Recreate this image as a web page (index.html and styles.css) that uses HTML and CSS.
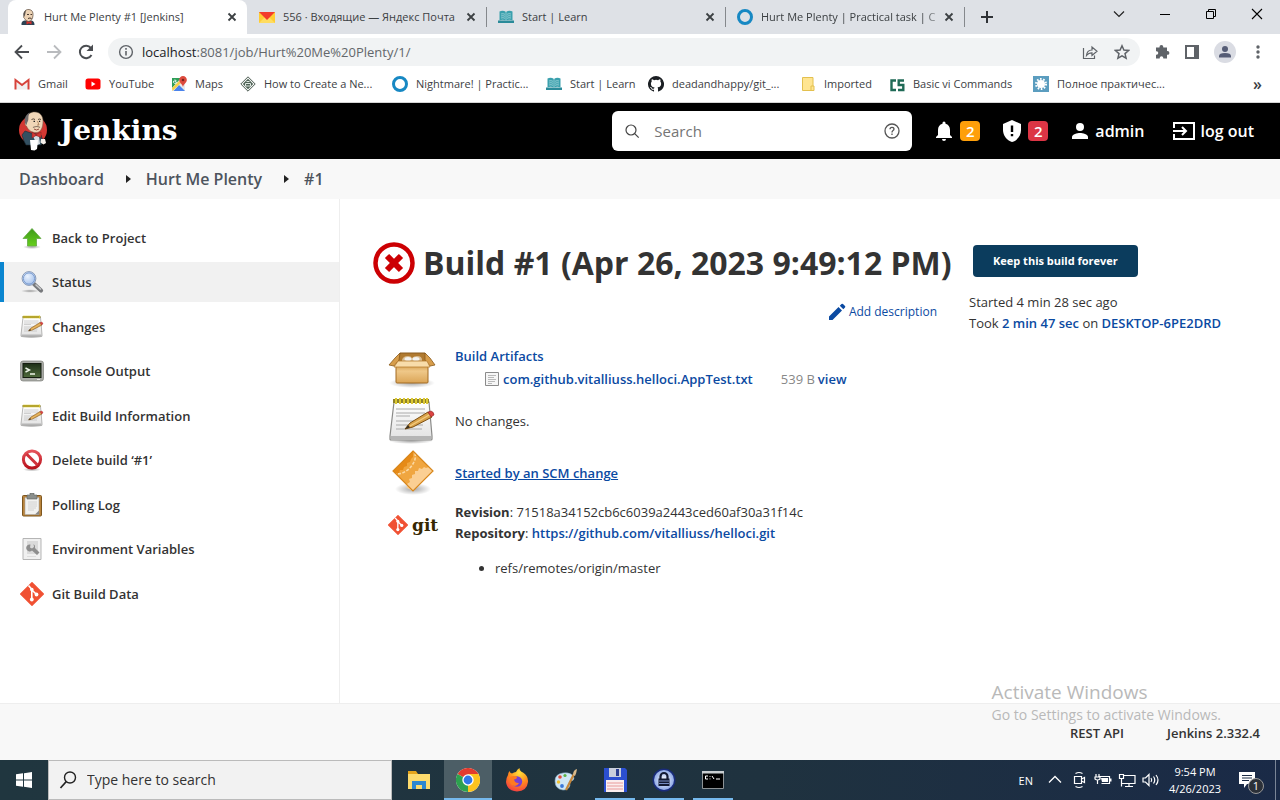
FILE: index.html
```
<!DOCTYPE html>
<html lang="en">
<head>
<meta charset="utf-8">
<title>Hurt Me Plenty #1 [Jenkins]</title>
<link rel="stylesheet" href="styles.css">
</head>
<body>
<svg class="defs" aria-hidden="true">
  <defs>
    <linearGradient id="g-green" x1="0" y1="0" x2="0" y2="1"><stop offset="0" stop-color="#3f9a1c"/><stop offset="1" stop-color="#66cf1b"/></linearGradient>
    <linearGradient id="g-box" x1="0" y1="0" x2="0" y2="1"><stop offset="0" stop-color="#d9a354"/><stop offset=".3" stop-color="#efc889"/><stop offset="1" stop-color="#dba557"/></linearGradient>
    <linearGradient id="g-paper" x1="0" y1="0" x2="0" y2="1"><stop offset="0" stop-color="#ffffff"/><stop offset="1" stop-color="#e2e2e2"/></linearGradient>
    <linearGradient id="g-orange" x1="0" y1="0" x2="1" y2="1"><stop offset="0" stop-color="#e98f1c"/><stop offset="1" stop-color="#f0a640"/></linearGradient>
    <linearGradient id="g-red" x1="0" y1="0" x2="0" y2="1"><stop offset="0" stop-color="#e5525a"/><stop offset="1" stop-color="#b8121c"/></linearGradient>
    <linearGradient id="g-term" x1="0" y1="0" x2="0" y2="1"><stop offset="0" stop-color="#1d2e17"/><stop offset="1" stop-color="#4f6b3c"/></linearGradient>
    <radialGradient id="g-lens" cx=".4" cy=".35" r=".7"><stop offset="0" stop-color="#eaf3ff"/><stop offset="1" stop-color="#9dbbe8"/></radialGradient>
    <radialGradient id="g-fox" cx=".6" cy=".2" r=".9"><stop offset="0" stop-color="#ffe13a"/><stop offset=".5" stop-color="#ff8a1c"/><stop offset="1" stop-color="#f0304a"/></radialGradient>
    <radialGradient id="g-shade"><stop offset="0" stop-color="#000" stop-opacity=".35"/><stop offset="1" stop-color="#000" stop-opacity="0"/></radialGradient>
    <radialGradient id="g-lock"><stop offset="0" stop-color="#ffffff"/><stop offset="1" stop-color="#8fa9e6"/></radialGradient>
    <clipPath id="c-diamond"><path d="M24 3L43.500 23 24 43 4.500 23z"/></clipPath>
  </defs>
  <symbol id="butler" viewBox="0 0 28 40">
    <circle cx="14" cy="19" r="14" fill="#d33833"/>
    <path d="M6 20L3 24 5 30 7 34 22 34 24 30 22 24 12 22z" fill="#335061" stroke="#1b2a33" stroke-width=".6"/>
    <path d="M14 25l6 0 1 8-3 1z" fill="#d9dee2"/>
    <path d="M7 8C8 3 12 .8 16 1 21 1.200 24 5 24 10 24 16 22 21 18 21.500 13 22 9 19 7.500 15 5.500 14 5.500 11 7 11z" fill="#f0d6b7" stroke="#6b5a48" stroke-width=".5"/>
    <path d="M6.500 13C4.500 8 6.500 3.500 11 1.500 8.500 5 10 7 9 10 8 11 8 13 7.500 14z" fill="#6d6b6d"/>
    <path d="M12.500 8.500q2-1.200 3.500 0M19 8.500q1.500-1 3 0" stroke="#4a3a2c" stroke-width=".9" fill="none"/>
    <path d="M14.500 10.300h1.500M20 10.300h1.200" stroke="#222" stroke-width="1.300"/>
    <path d="M18.500 10l1.500 4h-2" fill="none" stroke="#a57a52" stroke-width=".8"/>
    <path d="M14 16.500q4-2 7 0" fill="none" stroke="#8a7765" stroke-width="1.200"/>
    <path d="M15 18q2.500 2 5 0" fill="none" stroke="#8c3d32" stroke-width=".9"/>
    <path d="M13 21l4 2.500 5-2.500v5.500l-5-2-4 2.500z" fill="#d33833" stroke="#81231f" stroke-width=".5"/>
    <path d="M11 29h8l-1 9-2.500 1.500L12 39z" fill="#fff"/>
    <path d="M22 28l4 0 1 4-2.500 1.500-3-2z" fill="#f5f0ea"/>
  </symbol>
  <symbol id="butler-small" viewBox="0 0 16 16">
    <path d="M1.500 16q-.5-4 3-4.500h7q3 .5 3 4.500z" fill="#2c4353"/>
    <path d="M4 4.500Q5 0 9 .5q4.500.5 4 6-.5 5.500-4.500 6Q5.500 12 4.500 9.500 3 8.500 4 7z" fill="#ecd2b4" stroke="#5b4a3c" stroke-width=".7"/>
    <path d="M3.700 8Q2.500 3 6 1q-.5 3-1 5z" fill="#59514c"/>
    <path d="M7 5.500h2M10.500 5.500h1.500M8 9.500q2-1 3.500 0" stroke="#493a30" fill="none"/>
    <path d="M6.500 12l2.500 1 2.500-1v3.500L9 14.300 6.500 15.500z" fill="#d8302a"/>
  </symbol>
  <symbol id="book" viewBox="0 0 16 16">
    <path d="M0 11.500h16v2.500H0z" fill="#2a8a99"/>
    <path d="M1.500 2.500 Q5 1 8 3 Q11 1 14.500 2.500V11.500Q11 10 8 11.800Q5 10 1.500 11.500Z" fill="#3aa0ad"/>
    <path d="M3 5q2-.8 4 .3M3 7q2-.8 4 .3M3 9q2-.8 4 .3M9 5.300q2-1.100 4-.3M9 7.300q2-1.100 4-.3M9 9.300q2-1.100 4-.3M8 3v9" stroke="#c4e6ea" stroke-width=".6" fill="none"/>
  </symbol>
  <symbol id="ring" viewBox="0 0 16 16"><circle cx="8" cy="8" r="6.500" fill="none" stroke="#1788c3" stroke-width="3"/></symbol>
  <symbol id="close" viewBox="0 0 16 16"><path d="M4.500 4.500l7 7M11.500 4.500l-7 7" stroke="#3c4043" stroke-width="1.800"/></symbol>
  <symbol id="notepad" viewBox="0 0 48 48">
    <ellipse cx="23" cy="44" rx="22" ry="3" fill="url(#g-shade)"/>
    <path d="M6 5h35l3 34v3q0 1-1 1H3q-1 0-1-1v-3z" fill="url(#g-paper)" stroke="#8a8a88" stroke-width="1.200"/>
    <path d="M3 39h40v3.500H3z" fill="#b5b5b5"/>
    <path d="M8 12h29M8 16h29M8 19h14M8 24h28M8 28h27M8 32h26" stroke="#aaa" stroke-width="1"/>
    <path d="M5 2h36v4H5z" fill="#8f8328"/>
    <path d="M8 1v6M12 1v6M16 1v6M20 1v6M24 1v6M28 1v6M32 1v6M36 1v6M39 1v6" stroke="#dcc832" stroke-width="2"/>
    <path d="M17 32l5-6L40 15l4 5L25 30z" fill="#d9a24a" stroke="#7c4f12" stroke-width="1"/>
    <path d="M22 29L42 17.500" stroke="#f3cd82" stroke-width="1.200"/>
    <path d="M40 15l3-1q3 1 3 4l-3 2z" fill="#dc4343" stroke="#8c2020" stroke-width=".6"/>
    <path d="M17 32l3-4 2 2.500z" fill="#3b3020"/>
  </symbol>
  <symbol id="git" viewBox="0 0 24 24">
    <path d="M12 .7 23.300 12 12 23.300 .7 12Z" fill="#f05133" stroke="#f05133" stroke-width="1.400" stroke-linejoin="round"/>
    <path d="M8.500 3.500l3.300 3.800v10M12 8l4.500 4.500" stroke="#fff" stroke-width="1.600" fill="none"/>
    <circle cx="11.800" cy="7.600" r="1.800" fill="#fff"/><circle cx="11.800" cy="17.500" r="1.900" fill="#fff"/><circle cx="16.500" cy="12.500" r="1.900" fill="#fff"/>
  </symbol>
</svg>

<header class="browser">
  <div class="tabstrip">
    <div class="tab tab-active"><svg class="i16"><use href="#butler-small"/></svg><span class="tab-title">Hurt Me Plenty #1 [Jenkins]</span><button class="bare" aria-label="Close tab"><svg class="i16"><use href="#close"/></svg></button></div>
    <div class="tab"><svg class="i16" viewBox="0 0 16 16"><path d="M0 3h16v11H0z" fill="#ffcc33"/><path d="M0 14l6-6h4l6 6z" fill="#ffdc60"/><path d="M0 3h16L8 11z" fill="#f33b2c"/></svg><span class="tab-title">556 · Входящие — Яндекс Почта</span><button class="bare" aria-label="Close tab"><svg class="i16"><use href="#close"/></svg></button></div>
    <div class="tab tab-line"><svg class="i16"><use href="#book"/></svg><span class="tab-title">Start | Learn</span><button class="bare" aria-label="Close tab"><svg class="i16"><use href="#close"/></svg></button></div>
    <div class="tab tab-line"><svg class="i16"><use href="#ring"/></svg><span class="tab-title tab-fade">Hurt Me Plenty | Practical task | C</span><button class="bare" aria-label="Close tab"><svg class="i16"><use href="#close"/></svg></button></div>
    <button class="bare newtab" aria-label="New tab"><svg class="i16" viewBox="0 0 16 16"><path d="M8 2v12M2 8h12" stroke="#2f3236" stroke-width="2"/></svg></button>
    <div class="winctl">
      <button class="bare" aria-label="Search tabs"><svg class="i16" viewBox="0 0 16 16"><path d="M3 5.500l5 5 5-5" fill="none" stroke="#222" stroke-width="1.200"/></svg></button>
      <button class="bare" aria-label="Minimize"><svg class="i16" viewBox="0 0 16 16"><path d="M3 8.500h10" stroke="#000"/></svg></button>
      <button class="bare" aria-label="Restore"><svg class="i16" viewBox="0 0 16 16"><path d="M3.500 5.500h7v7h-7zM5.500 5.500v-2h7v7h-2" fill="none" stroke="#000"/></svg></button>
      <button class="bare" aria-label="Close"><svg class="i16" viewBox="0 0 16 16"><path d="M3 3l10 10M13 3L3 13" stroke="#000" stroke-width="1.100"/></svg></button>
    </div>
  </div>
  <div class="toolbar">
    <button class="bare" aria-label="Back"><svg class="i20" viewBox="0 0 20 20"><path d="M17 10H4M10 3.500L3.500 10l6.500 6.500" fill="none" stroke="#4a4d51" stroke-width="1.800"/></svg></button>
    <button class="bare" aria-label="Forward"><svg class="i20" viewBox="0 0 20 20"><path d="M3 10h13M10 3.500l6.500 6.500-6.500 6.500" fill="none" stroke="#b9bbbe" stroke-width="1.800"/></svg></button>
    <button class="bare" aria-label="Reload"><svg class="i20" viewBox="0 0 20 20"><path d="M15.500 13a6.200 6.200 0 1 1-.6-7" fill="none" stroke="#4a4d51" stroke-width="2"/><path d="M17 2.500v6.500h-6.500z" fill="#4a4d51"/></svg></button>
    <div class="omnibox">
      <svg class="i16" viewBox="0 0 16 16"><circle cx="8" cy="8" r="6.400" fill="none" stroke="#5f6368" stroke-width="1.400"/><path d="M8 7v4.500M8 4v1.700" stroke="#5f6368" stroke-width="1.600"/></svg>
      <a class="url" href="#"><span class="host">localhost</span>:8081/job/Hurt%20Me%20Plenty/1/</a>
      <svg class="i16" viewBox="0 0 16 16"><path d="M1.500 4v10.500h11v-3" fill="none" stroke="#5f6368" stroke-width="1.200"/><path d="M4.500 11.500q.5-5.500 5.500-5.500V3l5 4.300-5 4.200V8.800Q6.500 8.800 4.500 11.500z" fill="none" stroke="#5f6368" stroke-width="1.200"/></svg>
      <svg class="i16" viewBox="0 0 16 16"><path d="M8 1.800l1.900 4.300 4.700.4-3.600 3.100 1.100 4.600L8 11.800l-4.100 2.400L5 9.600 1.400 6.500l4.700-.4z" fill="none" stroke="#5f6368" stroke-width="1.500"/></svg>
    </div>
    <div class="tools">
      <svg class="i16" viewBox="0 0 16 16"><path d="M5.500 3a1.900 1.900 0 0 1 3.800 0V3.500H13V7h.5a1.900 1.900 0 0 1 0 3.800H13V14.500H9.300V14a1.800 1.800 0 0 0-3.600 0v.5H2V10.800h.5a1.800 1.800 0 0 0 0-3.600H2V3.500h3.500z" fill="#5f6368"/></svg>
      <svg class="i16" viewBox="0 0 16 16"><path d="M2 2h12v12H2z" fill="none" stroke="#5f6368" stroke-width="2"/><path d="M10 2h4v12h-4z" fill="#5f6368"/></svg>
      <svg class="i22" viewBox="0 0 22 22"><circle cx="11" cy="11" r="11" fill="#dadce3"/><circle cx="11" cy="8" r="3" fill="#565d76"/><path d="M5 16.500v-1.500q0-3 6-3t6 3v1.500z" fill="#565d76"/></svg>
      <svg class="i16" viewBox="0 0 16 16" fill="#5f6368"><circle cx="8" cy="3" r="1.700"/><circle cx="8" cy="8" r="1.700"/><circle cx="8" cy="13" r="1.700"/></svg>
    </div>
  </div>
  <nav class="bookmarks" aria-label="Bookmarks">
    <a href="#"><svg class="i16" viewBox="0 0 16 16"><path d="M2.500 13.500V6l5.500 4.500L13.500 6v7.500z" fill="#f0f0f0"/><path d="M1.500 13.500V4L8 9l6.500-5v9.500" fill="none" stroke="#d6433b" stroke-width="2"/></svg>Gmail</a>
    <a href="#"><svg class="i16" viewBox="0 0 16 16"><rect x=".5" y="2.500" width="15" height="11" rx="2.500" fill="#f00"/><path d="M6.500 5.500v5l4-2.500z" fill="#fff"/></svg>YouTube</a>
    <a href="#"><svg class="i16" viewBox="0 0 16 16"><path d="M1 2h13v13H1z" fill="#e8eaed"/><path d="M1 2h9L1 12z" fill="#2f9e58"/><path d="M2.500 15L8 9l6 6z" fill="#4a83ec"/><path d="M1 12l7-7 2 2-8.500 8z" fill="#f7d24a"/><path d="M12 0a3.800 3.800 0 0 0-3.800 4C8.200 6.500 11 7.500 12 11c1-3.500 3.800-4.500 3.800-7A3.800 3.800 0 0 0 12 0z" fill="#dd4b3e"/><circle cx="12" cy="4" r="1.300" fill="#7b231c"/><path d="M5.500 5H4v1h.8M5.800 6a1.700 1.700 0 1 1-.6-1.500" fill="none" stroke="#fff" stroke-width=".8"/></svg>Maps</a>
    <a href="#"><svg class="i16" viewBox="0 0 16 16"><path d="M8 .8L15.200 8 8 15.200.8 8z" fill="#f4f6f4" stroke="#4a5a50" stroke-width="1"/><path d="M8 2.800l5.200 5.200L8 13.200 2.800 8z" fill="#4f6256"/><path d="M5.500 7.500h5v2.500h-5zM6.500 5.500h3" stroke="#dfe8e2" fill="none"/></svg>How to Create a Ne...</a>
    <a href="#"><svg class="i16"><use href="#ring"/></svg>Nightmare! | Practic...</a>
    <a href="#"><svg class="i16"><use href="#book"/></svg>Start | Learn</a>
    <a href="#"><svg class="i16" viewBox="0 0 16 16"><path fill="#1b1f23" d="M8 0a8 8 0 0 0-2.530 15.590c.4.070.55-.17.55-.38v-1.490c-2.010.37-2.530-.49-2.690-.94-.09-.23-.48-.94-.82-1.130-.28-.15-.68-.52-.01-.53.63-.01 1.080.58 1.230.82.720 1.210 1.870.87 2.330.66.07-.52.28-.87.51-1.070-1.780-.2-3.640-.89-3.640-3.950 0-.87.31-1.590.82-2.150-.08-.2-.36-1.020.08-2.120 0 0 .67-.21 2.200.82a7.600 7.600 0 0 1 4 0c1.530-1.040 2.200-.82 2.200-.82.44 1.100.16 1.920.08 2.120.51.56.82 1.270.82 2.150 0 3.070-1.870 3.750-3.650 3.950.29.25.54.73.54 1.480v2.200c0 .21.15.46.55.38A8 8 0 0 0 8 0z"/></svg>deadandhappy/git_...</a>
    <a href="#"><svg class="i16" viewBox="0 0 16 16"><path d="M2.500 1.500h10.500v8.500h1v4.500H2.500z" fill="#ffe591" stroke="#e3c04f"/><path d="M11 14.500V10h2" fill="none" stroke="#e3c04f"/></svg>Imported</a>
    <a href="#"><svg class="i16" viewBox="0 0 16 16"><path d="M7 4.500H2.500v9.500H7M15 4.500H9.700v4.500h4.600v5H9" fill="none" stroke="#1f6a56" stroke-width="2.400"/></svg>Basic vi Commands</a>
    <a href="#"><svg class="i16" viewBox="0 0 16 16"><path d="M0 0h16v16H0z" fill="#5b9dbf"/><circle cx="8" cy="8" r="4" fill="#fff"/><circle cx="8" cy="8" r="5" fill="none" stroke="#fff" stroke-width="2" stroke-dasharray="1.600 1.540"/></svg>Полное практичес...</a>
    <button class="bare more" aria-label="More bookmarks">»</button>
  </nav>
</header>

<div class="masthead">
  <a class="brand" href="#"><svg class="brand-icon"><use href="#butler"/></svg>Jenkins</a>
  <form class="searchbox">
    <svg class="i16" viewBox="0 0 16 16"><circle cx="7" cy="7" r="5" fill="none" stroke="#444" stroke-width="1.200"/><path d="M10.700 10.700l4 4" stroke="#444" stroke-width="1.200"/></svg>
    <input type="text" placeholder="Search" aria-label="Search">
    <a href="#" aria-label="Help"><svg class="i16" viewBox="0 0 16 16"><circle cx="8" cy="8" r="7" fill="none" stroke="#555" stroke-width="1.300"/><path d="M6 6.300q0-2 2-2t2 1.800q0 1-1.200 1.700Q8 8.400 8 9.500M8 10.600v1.400" fill="none" stroke="#555" stroke-width="1.300"/></svg></a>
  </form>
  <a class="alert" href="#"><svg class="i24" viewBox="0 0 24 24" fill="#fff"><path d="M12 22a2 2 0 0 0 2-2h-4a2 2 0 0 0 2 2zm6-6v-5c0-3.100-1.600-5.600-4.500-6.300V4a1.500 1.500 0 0 0-3 0v.7C7.600 5.400 6 7.900 6 11v5l-2 2v1h16v-1z"/></svg><span class="badge badge-orange">2</span></a>
  <a class="alert" href="#"><svg class="i24" viewBox="0 0 24 24"><path d="M12 1L3 5v6c0 5.500 3.800 10.700 9 12 5.200-1.300 9-6.500 9-12V5z" fill="#fff"/><path d="M12 6.500v6.500M12 15v2.200" stroke="#000" stroke-width="2.400"/></svg><span class="badge badge-red">2</span></a>
  <a class="who" href="#"><svg class="i24" viewBox="0 0 24 24" fill="#fff"><circle cx="12" cy="8" r="4"/><path d="M4 20v-2c0-2.700 5.300-4 8-4s8 1.300 8 4v2z"/></svg>admin</a>
  <a class="logout" href="#"><svg class="i24" viewBox="0 0 24 24"><path d="M2 9V4h20v16H2v-5M1 12h12M10 8l4 4-4 4" fill="none" stroke="#fff" stroke-width="2"/></svg>log out</a>
</div>

<nav class="crumbs" aria-label="Breadcrumb">
  <a href="#">Dashboard</a><svg class="arrow" viewBox="0 0 5 8"><path d="M0 0l5 4-5 4z"/></svg>
  <a href="#">Hurt Me Plenty</a><svg class="arrow" viewBox="0 0 5 8"><path d="M0 0l5 4-5 4z"/></svg>
  <a href="#">#1</a>
</nav>

<div class="page">
  <nav class="side" aria-label="Build">
    <a href="#"><svg class="i24" viewBox="0 0 24 24"><ellipse cx="12" cy="21" rx="9" ry="2" fill="url(#g-shade)"/><path d="M12 2.500l9 10h-4.500V20h-9v-7.500H3z" fill="url(#g-green)" stroke="#63a845" stroke-width=".8"/></svg>Back to Project</a>
    <a class="current" href="#"><svg class="i24" viewBox="0 0 24 24"><ellipse cx="10" cy="21" rx="9" ry="1.800" fill="url(#g-shade)"/><path d="M14 14l7 6.500" stroke="#77797c" stroke-width="4.200" stroke-linecap="round"/><path d="M15.500 14.500l5.500 5" stroke="#c9cacc" stroke-width="1.500"/><circle cx="9" cy="8.500" r="6.900" fill="url(#g-lens)" stroke="#8c9db8" stroke-width="1"/><circle cx="9" cy="8.500" r="5.600" fill="none" stroke="#7d9ed2" stroke-width="1"/></svg>Status</a>
    <a href="#"><svg class="i24"><use href="#notepad"/></svg>Changes</a>
    <a href="#"><svg class="i24" viewBox="0 0 24 24"><rect x=".5" y="2" width="23" height="20" rx="2.500" fill="#a9aba6" stroke="#7f817d" stroke-width=".7"/><rect x="3" y="4.500" width="18" height="14" fill="url(#g-term)" stroke="#151d10"/><path d="M5.500 9l4 2-4 2M10 15h5" fill="none" stroke="#eef5e8" stroke-width="1.400"/><path d="M17 20.500h3" stroke="#e8e8e8"/></svg>Console Output</a>
    <a href="#"><svg class="i24"><use href="#notepad"/></svg>Edit Build Information</a>
    <a href="#"><svg class="i24" viewBox="0 0 24 24"><ellipse cx="12" cy="21.500" rx="9" ry="2" fill="url(#g-shade)"/><circle cx="12" cy="11.500" r="8.600" fill="#fff" stroke="url(#g-red)" stroke-width="3"/><path d="M6.500 6l11 11" stroke="#d0323b" stroke-width="3"/></svg>Delete build ‘#1’</a>
    <a href="#"><svg class="i24" viewBox="0 0 24 24"><rect x="2.500" y="2.500" width="19" height="20.500" rx="1" fill="#b9843c" stroke="#7d561f"/><path d="M5 4.500h14v17H5z" fill="#f2f2f0" stroke="#aaa" stroke-width=".6"/><path d="M15 21.500l4-4v4z" fill="#888"/><path d="M8 9h9M8 11h9M8 13h9M8 15h8M8 17h6" stroke="#c9c9c9" stroke-width=".8"/><path d="M7 2h3V0h4v2h3v4H7z" fill="#8b8f8c" stroke="#5f625f" stroke-width=".6"/></svg>Polling Log</a>
    <a href="#"><svg class="i24" viewBox="0 0 24 24"><path d="M3 1.500h18v21H3z" fill="#f0f0f0" stroke="#b5b5b5"/><path d="M7 4h11v13H7z" fill="#dadada"/><path d="M10.500 7.500a3.500 3.500 0 1 0 1.500 6l5 4.500 2.500-2.500-4.500-4.500a3.500 3.500 0 0 0-1.500-4l.5 3-2 1.500-2-1z" fill="#8e8e8e"/><path d="M7 19.500h9" stroke="#ddd"/></svg>Environment Variables</a>
    <a href="#"><svg class="i24"><use href="#git"/></svg>Git Build Data</a>
  </nav>

  <main class="content">
    <section class="build">
      <h1><svg class="i42" viewBox="0 0 42 42"><circle cx="21" cy="21" r="18.500" fill="#fff" stroke="#cc0003" stroke-width="4.500"/><path d="M14 14l14 14M28 14L14 28" stroke="#cc0003" stroke-width="6"/></svg>Build #1 (Apr 26, 2023 9:49:12 PM)</h1>
      <a class="adddesc" href="#"><svg class="i18" viewBox="0 0 18 18" fill="#0b4aa2"><path d="M1 13.500V17h3.500L14 7.500 10.500 4zM17 4.500q.7-.8 0-1.500L15 1q-.8-.7-1.500 0L11.800 2.700l3.500 3.500z"/></svg>Add description</a>
      <table class="summary">
        <tr class="r-art">
          <td class="pic"><svg class="i48" viewBox="0 0 48 48"><ellipse cx="24" cy="37" rx="23" ry="5" fill="url(#g-shade)"/><path d="M12 7h25l4 10H8z" fill="#b07a30" stroke="#8a5a1c"/><path d="M14 14q1-4 6-4 3 0 4 2 2-2 5-2 5 0 5 4v3H14z" fill="#d9bd92"/><ellipse cx="20" cy="13" rx="3.500" ry="2" fill="#f4f4f2"/><ellipse cx="28" cy="13" rx="3.500" ry="2" fill="#f4f4f2"/><path d="M12 7L7 12 1 19l5 1 5-6zM37 7l5 5 5 7-5 1-5-6z" fill="#d79d4b" stroke="#8a5a1c" stroke-width=".8"/><path d="M8 20h32v16q0 1-1 1H9q-1 0-1-1z" fill="url(#g-box)" stroke="#a26b22"/><path d="M10 15h29l3 6H6z" fill="#f8dcaa" stroke="#b87e31" stroke-width=".8"/></svg></td>
          <td><a href="#">Build Artifacts</a>
            <div class="file"><svg class="i16" viewBox="0 0 16 16"><path d="M1.500 1.500h13v13h-13z" fill="#f6f6f6" stroke="#8b8b8b"/><path d="M4 4.500h8M4 6.500h6M4 8.500h8M4 10.500h7M4 12.500h4" stroke="#aaa" stroke-width=".8"/></svg><a href="#">com.github.vitalliuss.helloci.AppTest.txt</a><span class="size">539 B</span><a href="#">view</a></div></td>
        </tr>
        <tr class="r-chg"><td class="pic"><svg class="i48"><use href="#notepad"/></svg></td><td>No changes.</td></tr>
        <tr class="r-scm">
          <td class="pic"><svg class="i48" viewBox="0 0 48 48"><ellipse cx="25" cy="39" rx="18" ry="6" fill="url(#g-shade)"/><path d="M25 1L45 21 25 41 5 21z" fill="#f0a640"/><path d="M25 1L5 21l3 3 3-1 1-3 3 0 1-3 3-1 0-3 3-1 1-3 2-2z" fill="#e68a17"/><path d="M27 3q1 5-1 9-3 6-8 9-4 3-10 3" fill="none" stroke="#fbd9a4" stroke-width="1.600" stroke-dasharray="3 1.500"/><path d="M45 21l-4-4-3 1-2-1-2 2-3-1-1 3-3 0 0 3-3 1 0 3-3 1 1 3-3 2 1 2-2 2 1 0 6 3z" fill="#fbcf93"/><path d="M25 1L45 21 25 41 5 21z" fill="none" stroke="#d8871c" stroke-width="1.200"/></svg></td>
          <td><a class="ul" href="#">Started by an SCM change</a></td>
        </tr>
        <tr class="r-git">
          <td class="pic"><span class="gitlogo"><svg class="i20"><use href="#git"/></svg>git</span></td>
          <td><b>Revision</b>: 71518a34152cb6c6039a2443ced60af30a31f14c<br><b>Repository</b>: <a href="#">https://github.com/vitalliuss/helloci.git</a>
            <ul><li>refs/remotes/origin/master</li></ul></td>
        </tr>
      </table>
    </section>
    <aside class="info">
      <button class="keep">Keep this build forever</button>
      <p>Started 4 min 28 sec ago<br>Took <a href="#">2 min 47 sec</a> on <a href="#">DESKTOP-6PE2DRD</a></p>
    </aside>
  </main>
</div>

<footer class="foot"><a href="#">REST API</a><a href="#">Jenkins 2.332.4</a></footer>
<div class="activate"><p class="act-big">Activate Windows</p><p class="act-small">Go to Settings to activate Windows.</p></div>

<div class="taskbar">
  <button class="bare start" aria-label="Start"><svg class="i16" viewBox="0 0 16 16" fill="#fff"><path d="M0 2.300L7 1.300v6.200H0zM8 1.200L16 0v7.500H8zM0 8.500h7v6.200l-7-1zM8 8.500h8V16l-8-1.200z"/></svg></button>
  <label class="tasksearch"><svg class="i20" viewBox="0 0 20 20"><circle cx="12" cy="7.500" r="5.500" fill="none" stroke="#222" stroke-width="1.400"/><path d="M8.200 11.600L2.500 18" stroke="#222" stroke-width="1.600"/></svg><input type="text" placeholder="Type here to search"></label>
  <div class="apps">
    <button class="app" aria-label="File Explorer"><svg class="i24" viewBox="0 0 24 24"><path d="M1 3h8l2 3h12v3H1z" fill="#e5a51c"/><path d="M1 6h22v15H1z" fill="#fddb6d"/><path d="M5 21v-8h14v8h-4v-4H9v4z" fill="#2d87d0"/></svg></button>
    <button class="app on focus" aria-label="Chrome"><svg class="i24" viewBox="0 0 24 24"><circle cx="12" cy="12" r="12" fill="#fff"/><path d="M12 12L1.600 6A12 12 0 0 1 22.400 6z" fill="#e23b2e"/><path d="M12 12L22.400 6A12 12 0 0 1 12 24z" fill="#fcc31e"/><path d="M12 12l0 12A12 12 0 0 1 1.600 6z" fill="#2da14f"/><path d="M22.400 6H12l5.200 9z" fill="#fcc31e"/><circle cx="12" cy="12" r="5.700" fill="#fff"/><circle cx="12" cy="12" r="4.400" fill="#2f77e6"/></svg></button>
    <button class="app" aria-label="Firefox"><svg class="i24" viewBox="0 0 24 24"><path d="M3 7q0-2 1.500-4Q5 5 7 5.500q2-1.500 4-1.500Q12 1.500 14.500 0q0 3 3.500 4.500Q23.500 8 23 14q-1 9-11 9.500Q2 23 1 14q0-4 2-7z" fill="url(#g-fox)"/><circle cx="12" cy="13.500" r="5.200" fill="#7a3fd0"/><path d="M5 9q4-2 7 0 0 2-3 2.500 1 4 5 3.500-2 4-6 2.500T5 9z" fill="#ff7a20"/></svg></button>
    <button class="app" aria-label="Paint"><svg class="i24" viewBox="0 0 24 24"><path d="M1 13Q1 6 9 5q9-1 11 5 0 3-4 3-2 1 0 4-1 5-7 5-8-1-8-9z" fill="#cfe6f5" stroke="#8fb6cf" stroke-width=".6"/><circle cx="6" cy="9" r="1.800" fill="#e34b3a"/><circle cx="11" cy="7.500" r="1.600" fill="#5bb346"/><circle cx="4.500" cy="14" r="1.700" fill="#f1c232"/><circle cx="8" cy="18" r="1.900" fill="#3c78d8"/><path d="M12 22l8-16" stroke="#c7873a" stroke-width="2.200"/><path d="M19 7q0-5 4-6-.500 4-2 7z" fill="#d9b98a"/></svg></button>
    <button class="app on" aria-label="Total Commander"><svg class="i24" viewBox="0 0 24 24"><path d="M1 0h21l2 2v22H1z" fill="#2b4fd0"/><path d="M6 0h12v9H6z" fill="#c9cfdc"/><path d="M13 1h3v7h-3z" fill="#2b3f90"/><path d="M3 12h18v12H3z" fill="#fbeeee"/><path d="M4 15h16M4 18h16M4 21h16" stroke="#e89a9a"/></svg></button>
    <button class="app on" aria-label="KeePass"><svg class="i24" viewBox="0 0 24 24"><circle cx="12" cy="12" r="11.500" fill="#1a2c7a"/><circle cx="12" cy="12" r="10" fill="url(#g-lock)"/><path d="M8.500 11V8.500a3.500 3.500 0 0 1 7 0V11" fill="none" stroke="#141a33" stroke-width="2.200"/><path d="M6.500 10.500h11V18h-11z" fill="#141a33"/><path d="M7 13h10M7 15.500h10" stroke="#8fa9e6" stroke-width=".8"/></svg></button>
    <button class="app on" aria-label="Command Prompt"><svg class="i24" viewBox="0 0 24 24"><path d="M1.500 3.500h21v17h-21z" fill="#000" stroke="#8c9295"/><path d="M1 3h22v2.500H1z" fill="#c9ced1"/><path d="M7 8H4.500v3H7M9 8v.8M9 10.500v.8M11 8l2 3M15 11h4" fill="none" stroke="#fff"/></svg></button>
  </div>
  <div class="tray">
    <span class="lang">EN</span>
    <svg class="i24" viewBox="0 0 24 24"><path d="M6 14.500l6-6 6 6" fill="none" stroke="#fff" stroke-width="1.300"/></svg>
    <svg class="i24" viewBox="0 0 24 24" fill="none" stroke="#fff"><path d="M8.500 5.500q3.500-2 7 0M8.500 18.500q3.500 2 7 0M7.500 8.500h7v7h-7zM14.500 11l3-1.500v5l-3-1.500" stroke-width="1.200"/></svg>
    <svg class="i24" viewBox="0 0 24 24"><path d="M7.500 8.500h11v7h-8" fill="none" stroke="#fff" stroke-width="1.200"/><path d="M10 10h7v4h-6zM19 10.500h1.500v3H19z" fill="#fff"/><path d="M5 6v3M8 6v3M4 9h5v2q-2.500 2-5 0zM6.500 12v4" stroke="#fff" fill="none" stroke-width="1.200"/></svg>
    <svg class="i24" viewBox="0 0 24 24"><path d="M9 7.500h11v8H6.500V11M10 18.500h8M14 15.500v3M4.500 6.500h4v4h-4zM6.500 10.500v8" fill="none" stroke="#fff" stroke-width="1.200"/></svg>
    <svg class="i24" viewBox="0 0 24 24"><path d="M4 10h2.500L10 6.500v11L6.500 14H4zM12 10q1.500 2 0 4M14.500 8.500q2.500 3.500 0 7M17 7q4 5 0 10" fill="none" stroke="#fff" stroke-width="1.200"/></svg>
    <span class="clock">9:54 PM<br>4/26/2023</span>
    <button class="bare notes" aria-label="Notifications"><svg class="i24" viewBox="0 0 24 24"><path d="M4 4h16v12h-8l-3 4v-4H4z" fill="#fff"/><path d="M7 7.500h10M7 10h10M7 12.500h7" stroke="#1c2c45"/></svg><span class="count">1</span></button>
  </div>
</div>
</body>
</html>
```

FILE: styles.css
```
* { box-sizing: border-box; }
body {
  margin: 0;
  min-height: 100vh;
  display: flex;
  flex-direction: column;
  position: relative;
  font: 13px/21px "Open Sans", "Noto Sans", sans-serif;
  color: #333;
  background: #fff;
}
a { color: #0b4aa2; text-decoration: none; font-weight: 600; }
p { margin: 0; }
svg { display: block; flex: none; }
.defs { position: absolute; width: 0; height: 0; }
.i16 { width: 16px; height: 16px; }
.i18 { width: 18px; height: 18px; }
.i20 { width: 20px; height: 20px; }
.i22 { width: 22px; height: 22px; }
.i24 { width: 24px; height: 24px; }
.i42 { width: 42px; height: 42px; }
.i48 { width: 48px; height: 48px; }
.bare {
  border: 0; padding: 0; background: none; font: inherit; color: inherit;
  display: flex; align-items: center; justify-content: center;
}

/* browser frame */
.browser { border-bottom: 1px solid #d5d5d5; font-size: 11px; line-height: 16px; color: #3c4043; }
.browser a { color: #3c4043; font-weight: 400; }
.tabstrip { display: flex; height: 34px; padding-left: 8px; background: #dee1e6; }
.tab { display: flex; align-items: center; width: 239px; padding: 0 7px 0 12px; gap: 8px; position: relative; }
.tab .bare { margin-left: -8px; }
.tab-active { background: #fff; border-radius: 8px 8px 0 0; }
.tab-title { flex: 1; min-width: 0; overflow: hidden; white-space: nowrap; }
.tab-fade { -webkit-mask-image: linear-gradient(90deg, #000 90%, rgba(0, 0, 0, .2)); mask-image: linear-gradient(90deg, #000 90%, rgba(0, 0, 0, .2)); }
.tab-line::before, .newtab::before { content: ""; position: absolute; left: 0; top: 7px; height: 20px; width: 1px; background: #85888c; }
.newtab { width: 46px; position: relative; }
.winctl { margin-left: auto; display: flex; height: 28px; }
.winctl .bare { width: 46px; }
.toolbar { display: flex; align-items: center; height: 36px; padding-left: 12px; gap: 12px; }
.omnibox { flex: 1; display: flex; align-items: center; height: 28px; padding: 0 10px; border-radius: 14px; background: #f1f3f4; gap: 16px; }
.omnibox .url { flex: 1; margin-left: -8px; font-size: 13px; color: #63676b; }
.omnibox .host { color: #202124; }
.tools { display: flex; align-items: center; gap: 14px; padding: 0 14px 0 2px; }
.bookmarks {
  display: grid; align-items: center; height: 32px; padding: 0 14px 4px;
  grid-template-columns: 71px 86px 69px 152px 154px 102px 152px 89px 144px 152px 1fr;
  white-space: nowrap;
}
.bookmarks a { display: flex; align-items: center; gap: 8px; }
.more { font-size: 16px; font-weight: 600; justify-self: end; padding-right: 4px; }

/* Jenkins header */
.masthead { display: flex; align-items: center; height: 56px; padding: 0 26px 0 18px; background: #000; }
.masthead > a { display: flex; align-items: center; color: #fff; font-size: 16px; }
.masthead .brand { gap: 12px; margin-right: auto; font: bold 28px/40px "DejaVu Serif", serif; }
.brand-icon { width: 30px; height: 40px; }
.searchbox { display: flex; align-items: center; width: 300px; height: 40px; padding: 0 12px; gap: 14px; border-radius: 6px; background: #fff; }
.searchbox input { flex: 1; min-width: 0; border: 0; padding: 0; background: none; font: 15px/24px "Open Sans", sans-serif; }
input::placeholder { color: #757575; opacity: 1; }
.masthead .alert { gap: 4px; margin-left: 20px; }
.badge { width: 20px; height: 20px; border-radius: 4px; font-size: 15px; line-height: 20px; text-align: center; }
.badge-orange { background: #fe9f0a; }
.badge-red { background: #dc3545; }
.masthead .who { gap: 3px; margin-left: 20px; }
.masthead .logout { gap: 4px; margin-left: 28px; }
.crumbs { display: flex; align-items: center; height: 40px; padding: 0 19px; background: #f8f8f8; font-size: 16px; }
.crumbs a { color: #4d545d; }
.arrow { width: 5px; height: 8px; margin: 0 15px 0 22px; fill: #222; }

/* page */
.page { flex: 1; display: flex; }
.side { flex: none; width: 340px; padding-top: 19px; border-right: 1px solid #eee; display: flex; flex-direction: column; gap: 4px; }
.side a { display: flex; align-items: center; gap: 8px; min-height: 40px; padding-left: 20px; color: #333; }
.side a:nth-child(even) { margin-bottom: 1px; }
.side .current { background: #f1f1f1; border-left: 4px solid #0b86d0; padding-left: 16px; }
.content { flex: 1; min-width: 0; display: flex; gap: 20px; padding: 43px 39px 0 33px; }
.build { flex: 1; min-width: 0; }
h1 { display: flex; align-items: center; gap: 8px; margin: 0; font-size: 32px; line-height: 42px; font-weight: 700; white-space: nowrap; }
.adddesc { display: flex; align-items: center; justify-content: flex-end; gap: 3px; margin: 17px 12px 0 0; font-size: 12px; font-weight: 400; }
.summary { margin: 24px 0 0 15px; border-collapse: collapse; }
.summary td { padding: 0; vertical-align: middle; }
.summary .pic { width: 67px; min-width: 67px; }
.r-art { height: 51px; }
.r-chg { height: 48px; }
.r-scm { height: 57px; }
.r-art td, .r-git td { vertical-align: top; }
.file { display: flex; align-items: center; padding-left: 29px; gap: 3px; line-height: 24px; }
.size { margin-left: 25px; color: #888; }
.ul { text-decoration: underline; }
.gitlogo { display: flex; align-items: center; gap: 4px; padding-top: 11px; font: bold 17px/24px "DejaVu Serif", serif; color: #362701; }
.summary ul { margin: 14px 0 0; padding-left: 40px; }
.info { flex: none; width: 272px; }
.keep { margin: 3px 0 0 4px; padding: 0 20px; height: 32px; border: 0; border-radius: 4px; background: #0b3c5d; color: #fff; font: 700 11px/16px "Open Sans", sans-serif; }
.info p { margin-top: 15px; }

.foot { display: flex; justify-content: flex-end; gap: 43px; height: 57px; padding: 19px 20px 0 0; border-top: 1px solid #eee; background: #f8f8f8; }
.foot a { color: #333; }
.activate { position: absolute; right: 59px; bottom: 75px; color: #b9b9b9; pointer-events: none; }
.act-big { font-size: 19px; line-height: 26px; }
.act-small { font-size: 14px; line-height: 20px; }

/* taskbar */
.taskbar { display: flex; height: 40px; background: linear-gradient(90deg, #20363f, #1f323f 60%, #1a2a47); color: #fff; }
.start { width: 48px; }
.tasksearch { display: flex; align-items: center; width: 344px; padding-left: 9px; gap: 9px; background: #f2f2f2; border: 1px solid #bbb; }
.tasksearch input { flex: 1; border: 0; padding: 0; background: none; font: 14px/20px "Open Sans", sans-serif; }
.tasksearch input::placeholder { color: #333; }
.apps { display: flex; gap: 1px; margin-left: 3px; }
.app { display: flex; align-items: center; justify-content: center; width: 48px; border: 0; padding: 0; background: none; position: relative; }
.app.on::after { content: ""; position: absolute; left: 4px; right: 4px; bottom: 0; height: 2px; background: #76b9ed; }
.app.focus { background: #4c5e66; }
.app.focus::after { left: 0; right: 0; }
.tray { display: flex; align-items: center; margin-left: auto; margin-right: 4px; border-right: 1px solid #7a8596; }
.lang { font-size: 11px; margin-right: 10px; }
.clock { width: 64px; text-align: center; font-size: 11px; line-height: 17px; }
.notes { width: 48px; position: relative; }
.notes .i24 { margin-right: 8px; }
.count { position: absolute; left: 21px; top: 10px; width: 16px; height: 16px; border: 1px solid #999; border-radius: 50%; background: #2b3038; font-size: 11px; line-height: 14px; }
```
